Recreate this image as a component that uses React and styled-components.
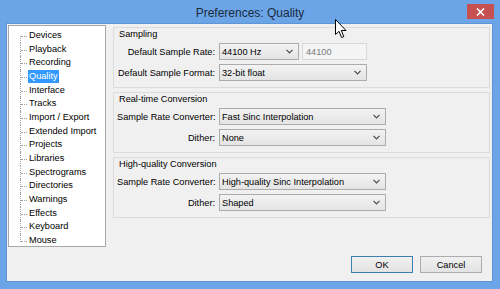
import styled, { createGlobalStyle } from 'styled-components';

const GlobalStyle = createGlobalStyle`
    html, body {
        margin: 0;
        padding: 0;
        background: #ffffff;
    }
    body {
        font-family: 'Liberation Sans', Arial, sans-serif;
    }
`;

const Window = styled.div`
    position: relative;
    width: 500px;
    height: 289px;
    background: #6ba5e7;
    display: flex;
    flex-direction: column;
    overflow: hidden;
`;

const TitleBar = styled.div`
    height: 23px;
    display: grid;
    grid-template-columns: 1fr auto 1fr;
    align-items: center;
`;

const Title = styled.div`
    grid-column: 2;
    font-size: 12px;
    color: #1b2b3c;
    padding-top: 2px;
`;

const CloseButton = styled.div`
    grid-column: 3;
    justify-self: end;
    align-self: start;
    margin: 4px 6px 0 0;
    width: 27px;
    height: 15px;
    background: #c75050;
    display: flex;
    align-items: center;
    justify-content: center;
`;

const Client = styled.div`
    flex: 1;
    margin: 0 7px 7px 6px;
    background: #f0f0f0;
    border: 1px solid #5d95d6;
    padding: 1px 2px 8px 1px;
    display: flex;
    flex-direction: column;
    font-size: 9.2px;
    color: #000;
`;

const Main = styled.div`
    display: flex;
    align-items: flex-start;
    gap: 7px;
`;

const Tree = styled.ul`
    list-style: none;
    margin: 0;
    width: 98px;
    height: 222px;
    box-sizing: border-box;
    padding: 3px 0 0 0;
    background: #ffffff;
    border: 1px solid #a8a8a8;
`;

const TreeItem = styled.li`
    position: relative;
    height: 13.67px;
    line-height: 13.67px;
    padding-left: 19px;

    &::before {
        content: '';
        position: absolute;
        left: 11px;
        top: ${p => (p.$first ? '7px' : '0')};
        bottom: ${p => (p.$last ? '6px' : '0')};
        border-left: 1px dotted #a0a0a0;
    }

    &::after {
        content: '';
        position: absolute;
        left: 12px;
        width: 6px;
        top: 7px;
        border-top: 1px dotted #a0a0a0;
    }
`;

const TreeLabel = styled.span`
    display: inline-block;
    padding: 0 1px;
    height: 13px;
    line-height: 13px;
    background: ${p => (p.$selected ? '#3399ff' : 'transparent')};
    color: ${p => (p.$selected ? '#ffffff' : '#000000')};
`;

const Settings = styled.div`
    flex: 1;
    display: flex;
    flex-direction: column;
    gap: 4px;
    margin-top: 2px;
`;

const Group = styled.div`
    border: 1px solid #dcdcdc;
    padding: 1px 3px 6px 3px;
`;

const GroupTitle = styled.div`
    height: 11px;
    line-height: 11px;
    padding-left: 2px;
    margin-bottom: 3px;
`;

const Rows = styled.div`
    display: grid;
    grid-template-columns: 98px auto;
    column-gap: 4px;
    row-gap: 4px;
    justify-content: start;
    align-items: center;
`;

const FieldLabel = styled.div`
    text-align: right;
    white-space: nowrap;
`;

const Controls = styled.div`
    display: flex;
    gap: 3px;
`;

const Combo = styled.div`
    width: ${p => p.$w}px;
    height: 17px;
    box-sizing: border-box;
    border: 1px solid #acacac;
    background: linear-gradient(#f3f3f3, #e4e4e4);
    display: flex;
    align-items: center;
    justify-content: space-between;
    padding: 0 5px 0 2px;
    white-space: nowrap;
`;

const TextField = styled.div`
    width: 65px;
    height: 17px;
    box-sizing: border-box;
    border: 1px solid #d9d9d9;
    background: #f4f4f4;
    color: #7a7a7a;
    display: flex;
    align-items: center;
    padding-left: 3px;
`;

const ButtonRow = styled.div`
    margin-top: 9px;
    display: flex;
    justify-content: flex-end;
    gap: 7px;
    padding-right: 8px;
`;

const Button = styled.div`
    width: 62px;
    height: 17px;
    box-sizing: border-box;
    border: 1px solid ${p => (p.$default ? '#3c7fb1' : '#adadad')};
    background: linear-gradient(#f0f0f0, #e3e3e3);
    display: flex;
    align-items: center;
    justify-content: center;
`;

const Pointer = styled.svg`
    position: absolute;
    left: 335px;
    top: 19px;
`;

function Chevron() {
    return (
        <svg width="7" height="5" viewBox="0 0 7 5">
            <polyline points="0.5,0.8 3.5,3.8 6.5,0.8" fill="none" stroke="#4a4a4a" strokeWidth="1.2" />
        </svg>
    );
}

const pages = [
    'Devices', 'Playback', 'Recording', 'Quality', 'Interface', 'Tracks',
    'Import / Export', 'Extended Import', 'Projects', 'Libraries',
    'Spectrograms', 'Directories', 'Warnings', 'Effects', 'Keyboard', 'Mouse',
];

function App() {
    return (
        <>
            <GlobalStyle />
            <Window>
                <TitleBar>
                    <Title>Preferences: Quality</Title>
                    <CloseButton>
                        <svg width="9" height="8" viewBox="0 0 9 8">
                            <path d="M1 0.5 L8 7.5 M8 0.5 L1 7.5" stroke="#ffffff" strokeWidth="1.6" />
                        </svg>
                    </CloseButton>
                </TitleBar>
                <Client>
                    <Main>
                        <Tree>
                            {pages.map((p, i) => (
                                <TreeItem key={p} $first={i === 0} $last={i === pages.length - 1}>
                                    <TreeLabel $selected={p === 'Quality'}>{p}</TreeLabel>
                                </TreeItem>
                            ))}
                        </Tree>
                        <Settings>
                            <Group>
                                <GroupTitle>Sampling</GroupTitle>
                                <Rows>
                                    <FieldLabel>Default Sample Rate:</FieldLabel>
                                    <Controls>
                                        <Combo $w={80}>44100 Hz<Chevron /></Combo>
                                        <TextField>44100</TextField>
                                    </Controls>
                                    <FieldLabel>Default Sample Format:</FieldLabel>
                                    <Combo $w={148}>32-bit float<Chevron /></Combo>
                                </Rows>
                            </Group>
                            <Group>
                                <GroupTitle>Real-time Conversion</GroupTitle>
                                <Rows>
                                    <FieldLabel>Sample Rate Converter:</FieldLabel>
                                    <Combo $w={167}>Fast Sinc Interpolation<Chevron /></Combo>
                                    <FieldLabel>Dither:</FieldLabel>
                                    <Combo $w={167}>None<Chevron /></Combo>
                                </Rows>
                            </Group>
                            <Group>
                                <GroupTitle>High-quality Conversion</GroupTitle>
                                <Rows>
                                    <FieldLabel>Sample Rate Converter:</FieldLabel>
                                    <Combo $w={167}>High-quality Sinc Interpolation<Chevron /></Combo>
                                    <FieldLabel>Dither:</FieldLabel>
                                    <Combo $w={167}>Shaped<Chevron /></Combo>
                                </Rows>
                            </Group>
                        </Settings>
                    </Main>
                    <ButtonRow>
                        <Button $default>OK</Button>
                        <Button>Cancel</Button>
                    </ButtonRow>
                </Client>
                <Pointer width="13" height="20" viewBox="0 0 13 20">
                    <path d="M0.5 0.5 L0.5 15.5 L4 12.3 L6.6 18.5 L8.8 17.6 L6.3 11.5 L11 11.5 Z" fill="#ffffff" stroke="#000000" strokeWidth="1" strokeLinejoin="miter" />
                </Pointer>
            </Window>
        </>
    );
}

export default App;
